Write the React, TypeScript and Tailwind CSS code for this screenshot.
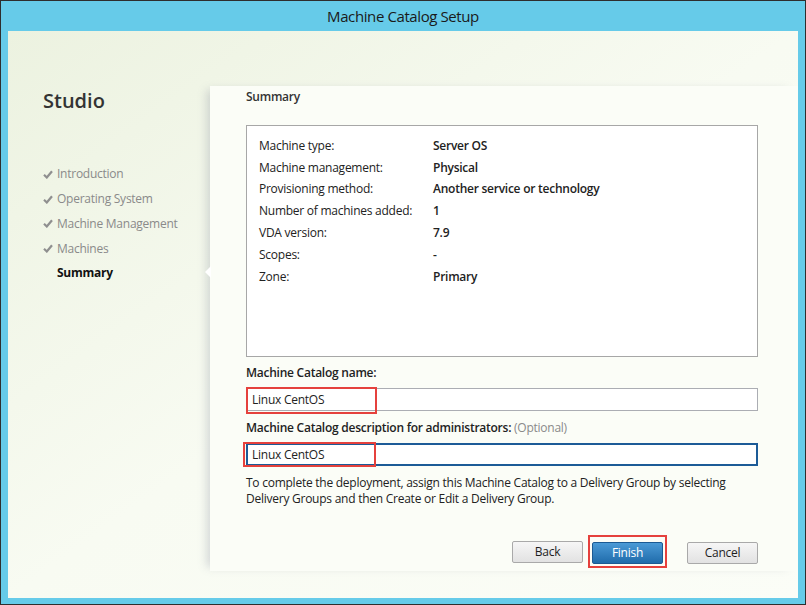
import React from 'react';

const rows: [string, string][] = [
  ['Machine type:', 'Server OS'],
  ['Machine management:', 'Physical'],
  ['Provisioning method:', 'Another service or technology'],
  ['Number of machines added:', '1'],
  ['VDA version:', '7.9'],
  ['Scopes:', '-'],
  ['Zone:', 'Primary'],
];

const steps = ['Introduction', 'Operating System', 'Machine Management', 'Machines'];

function Check() {
  return (
    <svg width="10" height="9" viewBox="0 0 10 9" className="shrink-0">
      <path d="M1 4.8 L3.8 7.5 L9 1.2" fill="none" stroke="#8f8f8f" strokeWidth="2.2" />
    </svg>
  );
}

function Button({ label, primary }: { label: string; primary?: boolean }) {
  return primary ? (
    <button className="w-[71px] h-[22px] rounded-[2px] border border-[#1b5a93] bg-gradient-to-b from-[#4a9ad6] to-[#1f6cab] text-[12px] text-white">
      {label}
    </button>
  ) : (
    <button className="w-[71px] h-[22px] rounded-[2px] border border-[#a9a9a9] bg-gradient-to-b from-[#f6f6f6] to-[#e2e2e2] text-[12px] text-[#1e1e1e]">
      {label}
    </button>
  );
}

export default function App() {
  return (
    <div
      className="w-[806px] h-[605px] bg-[#66cbe9] border border-[#2e2e2e] flex flex-col text-[#222] tracking-[-0.25px]"
      style={{ fontFamily: '"Open Sans", "Noto Sans", sans-serif' }}
    >
      <div className="h-[30px] flex items-center justify-center text-[15px] tracking-[-0.4px] text-[#1a1a1a]">Machine Catalog Setup</div>

      <div className="flex-1 mx-[7px] mb-[6px] flex bg-gradient-to-br from-[#ecf2e0] via-[#f8fbf2] to-[#fbfdf7]">
        {/* left nav */}
        <div className="w-[202px] pl-[35px]">
          <div className="mt-[56px] text-[20px] leading-[28px] font-semibold text-[#333] tracking-normal">Studio</div>
          <div className="mt-[47px] flex flex-col">
            {steps.map((s) => (
              <div key={s} className="h-[24.75px] flex items-center gap-[4px] text-[12px] text-[#8a8a8a]">
                <Check />
                <span>{s}</span>
              </div>
            ))}
            <div className="h-[24.75px] flex items-center pl-[14px] text-[12px] font-bold text-[#111]">Summary</div>
          </div>
        </div>

        {/* right card */}
        <div className="relative flex-1 mt-[55px] mb-[27px] pl-[36px] pr-[40px] pt-[3px] bg-[#fbfdf7] shadow-[-7px_0_9px_-4px_rgba(110,120,140,0.28)]">
          <div className="absolute left-[-5px] top-[180px] w-0 h-0 border-y-[6px] border-y-transparent border-r-[6px] border-r-white" />

          <div className="text-[12px] leading-[16px] font-semibold text-[#333]">Summary</div>

          <div className="mt-[20px] h-[232px] border border-[#a7a7a7] bg-white pt-[9px] pl-[12px]">
            {rows.map(([k, v]) => (
              <div key={k} className="flex h-[21.8px] items-center text-[12px]">
                <span className="w-[174px]">{k}</span>
                <span className="font-semibold">{v}</span>
              </div>
            ))}
          </div>

          <div className="mt-[8px] text-[12px] leading-[16px] font-semibold">Machine Catalog name:</div>
          <div className="relative mt-[7px] h-[23px] border border-[#abadb3] bg-white flex items-center pl-[5px] text-[12px]">
            Linux CentOS
            <div className="absolute left-[-1px] top-[-2px] w-[131px] h-[27px] border-2 border-[#e5413d]" />
          </div>

          <div className="mt-[9px] text-[12px] leading-[16px]">
            <span className="font-semibold">Machine Catalog description for administrators: </span>
            <span className="text-[#8a8a8a]">(Optional)</span>
          </div>
          <div className="relative mt-[7px] h-[23px] border-2 border-[#1c5b97] bg-white flex items-center pl-[4px] text-[12px]">
            Linux CentOS
            <div className="absolute left-[-5px] top-[-3px] w-[133px] h-[25px] border-2 border-[#e5413d]" />
          </div>

          <p className="mt-[9px] text-[12px] leading-[16px] pr-[20px]">
            To complete the deployment, assign this Machine Catalog to a Delivery Group by selecting Delivery Groups and then Create or Edit a Delivery Group.
          </p>

          <div className="mt-[28px] flex justify-end items-center">
            <Button label="Back" />
            <div className="ml-[5px] p-[2px] border-2 border-[#e5413d]">
              <Button label="Finish" primary />
            </div>
            <div className="ml-[20px]">
              <Button label="Cancel" />
            </div>
          </div>
        </div>
      </div>
    </div>
  );
}
